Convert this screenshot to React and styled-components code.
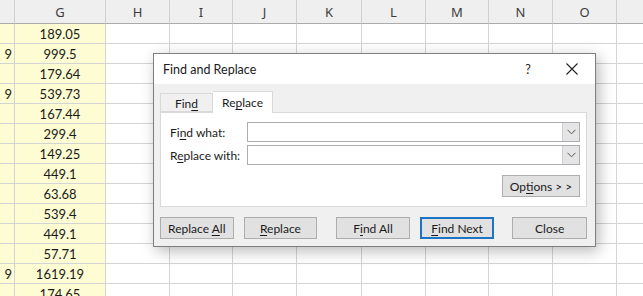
import React from "react";
import styled, { createGlobalStyle } from "styled-components";

const Global = createGlobalStyle`
  html, body { margin: 0; padding: 0; background: #fff; overflow: hidden; }
  #root { width: 643px; height: 296px; position: relative; overflow: hidden; }
`;

const COLS = [
  { key: "F", w: 15 },
  { key: "G", w: 91 },
  { key: "H", w: 64 },
  { key: "I", w: 63 },
  { key: "J", w: 64 },
  { key: "K", w: 65 },
  { key: "L", w: 64 },
  { key: "M", w: 63 },
  { key: "N", w: 64 },
  { key: "O", w: 64 },
  { key: "P", w: 64 },
];

const ROWS = [
  ["", "189.05"],
  ["9", "999.5"],
  ["", "179.64"],
  ["9", "539.73"],
  ["", "167.44"],
  ["", "299.4"],
  ["", "149.25"],
  ["", "449.1"],
  ["", "63.68"],
  ["", "539.4"],
  ["", "449.1"],
  ["", "57.71"],
  ["9", "1619.19"],
  ["", "174.65"],
];

const Sheet = styled.div`
  display: grid;
  grid-template-columns: ${COLS.map((c) => c.w + "px").join(" ")};
  grid-auto-rows: 20px;
  grid-template-rows: 24px;
  font-family: Lato, "Liberation Sans", sans-serif;
  font-size: 13px;
  color: #1a1a1a;
`;

const HeadCell = styled.div`
  box-sizing: border-box;
  background: #efefef;
  border-right: 1px solid #cfcfcf;
  border-bottom: 1px solid #ababab;
  display: flex;
  align-items: center;
  justify-content: center;
  color: #3c3c3c;
  font-family: "Noto Sans", sans-serif;
  font-size: 13px;
  padding-top: 1px;
`;

const Cell = styled.div`
  box-sizing: border-box;
  background: ${(p) => (p.$fill ? "#fdfcd3" : "#fff")};
  border-right: 1px solid #d4d4d4;
  border-bottom: 1px solid #d4d4d4;
  display: flex;
  align-items: center;
  justify-content: ${(p) => p.$align || "center"};
  padding: 0 2px;
  white-space: nowrap;
  overflow: hidden;
`;

const Dialog = styled.div`
  position: absolute;
  left: 153px;
  top: 53px;
  width: 443px;
  height: 194px;
  box-sizing: border-box;
  border: 1px solid #7f7f7f;
  background: #f0f0f0;
  box-shadow: 3px 4px 14px rgba(0, 0, 0, 0.28);
  font-family: Lato, "Noto Sans", sans-serif;
  font-size: 12px;
  color: #1a1a1a;
  display: flex;
  flex-direction: column;
`;

const TitleBar = styled.div`
  height: 30px;
  background: #fff;
  display: flex;
  align-items: center;
  padding: 0 13px 0 9px;
  font-size: 12.5px;
`;

const Title = styled.div`
  flex: 1;
`;

const TitleBtn = styled.div`
  width: 20px;
  display: flex;
  align-items: center;
  justify-content: center;
  color: #222;
  margin-left: ${(p) => p.$ml || 0}px;
`;

const Body = styled.div`
  flex: 1;
  padding: 7px 8px 0 6px;
  display: flex;
  flex-direction: column;
`;

const Tabs = styled.div`
  display: flex;
  align-items: flex-end;
  height: 21px;
  position: relative;
  z-index: 1;
`;

const Tab = styled.div`
  box-sizing: border-box;
  height: ${(p) => (p.$active ? 22 : 19)}px;
  width: ${(p) => p.$w}px;
  margin-bottom: ${(p) => (p.$active ? -1 : 0)}px;
  background: ${(p) => (p.$active ? "#fff" : "#f0f0f0")};
  border: 1px solid #d9d9d9;
  border-bottom: ${(p) => (p.$active ? "none" : "1px solid #d9d9d9")};
  border-left: ${(p) => (p.$active ? "none" : "1px solid #d9d9d9")};
  display: flex;
  align-items: center;
  justify-content: center;
  padding-top: ${(p) => (p.$active ? 0 : 2)}px;
`;

const Panel = styled.div`
  box-sizing: border-box;
  height: 95px;
  width: 427px;
  background: #fff;
  border: 1px solid #d9d9d9;
  padding: 9px 6px 0 9px;
  display: flex;
  flex-direction: column;
`;

const FieldRow = styled.div`
  display: flex;
  align-items: center;
  height: 20px;
  margin-bottom: 3px;
`;

const Label = styled.div`
  width: 77px;
`;

const Combo = styled.div`
  flex: 1;
  box-sizing: border-box;
  height: 20px;
  border: 1px solid #abadb3;
  background: #fff;
  display: flex;
  justify-content: flex-end;
`;

const ComboArrow = styled.div`
  width: 16px;
  background: #e5e5e5;
  border-left: 1px solid #cfcfcf;
  display: flex;
  align-items: center;
  justify-content: center;
`;

const OptionsRow = styled.div`
  display: flex;
  justify-content: flex-end;
  margin-top: 7px;
`;

const Button = styled.div`
  box-sizing: border-box;
  width: ${(p) => p.$w || 74}px;
  height: 22px;
  background: #e1e1e1;
  border: ${(p) => (p.$default ? "2px solid #1e74c4" : "1px solid #adadad")};
  display: flex;
  align-items: center;
  justify-content: center;
  margin-left: ${(p) => p.$ml || 0}px;
  white-space: nowrap;
`;

const ButtonRow = styled.div`
  display: flex;
  margin-top: 10px;
`;

const U = styled.span`
  text-decoration: underline;
  text-underline-offset: 2px;
`;

const Chevron = () => (
  <svg width="9" height="6" viewBox="0 0 9 6">
    <path d="M0.5 0.8 L4.5 4.8 L8.5 0.8" fill="none" stroke="#555" strokeWidth="1" />
  </svg>
);

const CloseIcon = () => (
  <svg width="12" height="12" viewBox="0 0 12 12">
    <path d="M0.5 0.5 L11.5 11.5 M11.5 0.5 L0.5 11.5" stroke="#222" strokeWidth="1.1" />
  </svg>
);

export default function App() {
  return (
    <>
      <Global />
      <Sheet>
        {COLS.map((c) => (
          <HeadCell key={c.key}>{c.key === "F" || c.key === "P" ? "" : c.key}</HeadCell>
        ))}
        {ROWS.map((r, i) =>
          COLS.map((c, j) => (
            <Cell
              key={i + "-" + c.key}
              $fill={j < 2}
              $align={j === 0 ? "flex-end" : "center"}
            >
              {j === 0 ? r[0] : j === 1 ? r[1] : ""}
            </Cell>
          ))
        )}
      </Sheet>
      <Dialog>
        <TitleBar>
          <Title>Find and Replace</Title>
          <TitleBtn>?</TitleBtn>
          <TitleBtn $ml={24}>
            <CloseIcon />
          </TitleBtn>
        </TitleBar>
        <Body>
          <Tabs>
            <Tab $w={53}>
              <span>
                Fin<U>d</U>
              </span>
            </Tab>
            <Tab $w={60} $active>
              <span>
                Re<U>p</U>lace
              </span>
            </Tab>
          </Tabs>
          <Panel>
            <FieldRow>
              <Label>
                Fi<U>n</U>d what:
              </Label>
              <Combo>
                <ComboArrow>
                  <Chevron />
                </ComboArrow>
              </Combo>
            </FieldRow>
            <FieldRow>
              <Label>
                R<U>e</U>place with:
              </Label>
              <Combo>
                <ComboArrow>
                  <Chevron />
                </ComboArrow>
              </Combo>
            </FieldRow>
            <OptionsRow>
              <Button $w={78}>
                <span>
                  Op<U>t</U>ions &gt; &gt;
                </span>
              </Button>
            </OptionsRow>
          </Panel>
          <ButtonRow>
            <Button $w={74}>
              <span>
                Replace <U>A</U>ll
              </span>
            </Button>
            <Button $w={74} $ml={10}>
              <span>
                <U>R</U>eplace
              </span>
            </Button>
            <Button $w={74} $ml={19}>
              <span>
                F<U>i</U>nd All
              </span>
            </Button>
            <Button $w={75} $ml={10} $default>
              <span>
                <U>F</U>ind Next
              </span>
            </Button>
            <Button $w={75} $ml={18}>
              Close
            </Button>
          </ButtonRow>
        </Body>
      </Dialog>
    </>
  );
}
